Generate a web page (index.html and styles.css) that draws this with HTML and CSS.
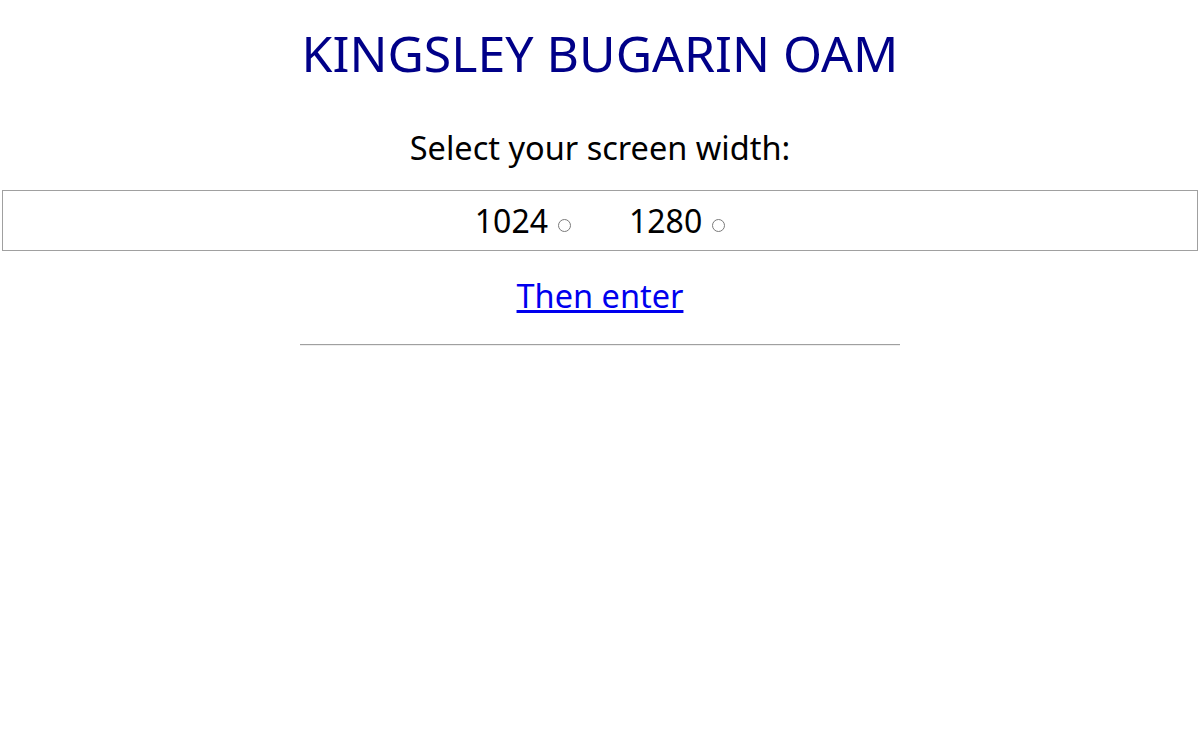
FILE: index.html
```html
<!DOCTYPE html>
<html>
<head>
<meta charset="utf-8">
<link rel="stylesheet" href="styles.css">
</head>
<body>
<div class="page">
  <h1 class="title">KINGSLEY BUGARIN OAM</h1>
  <p class="prompt">Select your screen width:</p>
  <div class="choices">
    <label class="choice">1024 <span class="radio"></span></label>
    <label class="choice">1280 <span class="radio"></span></label>
  </div>
  <a class="enter" href="#">Then enter</a>
  <hr class="rule">
</div>
</body>
</html>
```
FILE: styles.css
```css
html, body {
  margin: 0;
  padding: 0;
  background: #fff;
}
.page {
  display: flex;
  flex-direction: column;
  align-items: center;
  font-family: "Noto Sans", "Open Sans", sans-serif;
  padding: 0 2px 0 2px;
}
.title {
  margin: 20px 0 0 0;
  font-weight: normal;
  font-size: 50px;
  line-height: 66px;
  color: #000088;
}
.prompt {
  margin: 42px 0 0 0;
  font-size: 32.5px;
  line-height: 40px;
  color: #000;
}
.choices {
  margin-top: 22px;
  align-self: stretch;
  border: 1px solid #a0a0a0;
  height: 59px;
  display: flex;
  justify-content: center;
  align-items: center;
  gap: 58px;
  font-size: 32px;
  color: #000;
}
.choice {
  display: flex;
  align-items: center;
  gap: 10px;
}
.radio {
  width: 11px;
  height: 11px;
  border: 1px solid #7a7a7a;
  border-radius: 50%;
  margin-top: 10px;
}
.enter {
  margin-top: 25px;
  font-size: 32.5px;
  line-height: 40px;
  color: #0000ee;
}
.rule {
  width: 600px;
  margin: 28px 0 0 0;
  border: 0;
  border-top: 1px solid #a0a0a0;
  border-bottom: 1px solid #eee;
}
```
